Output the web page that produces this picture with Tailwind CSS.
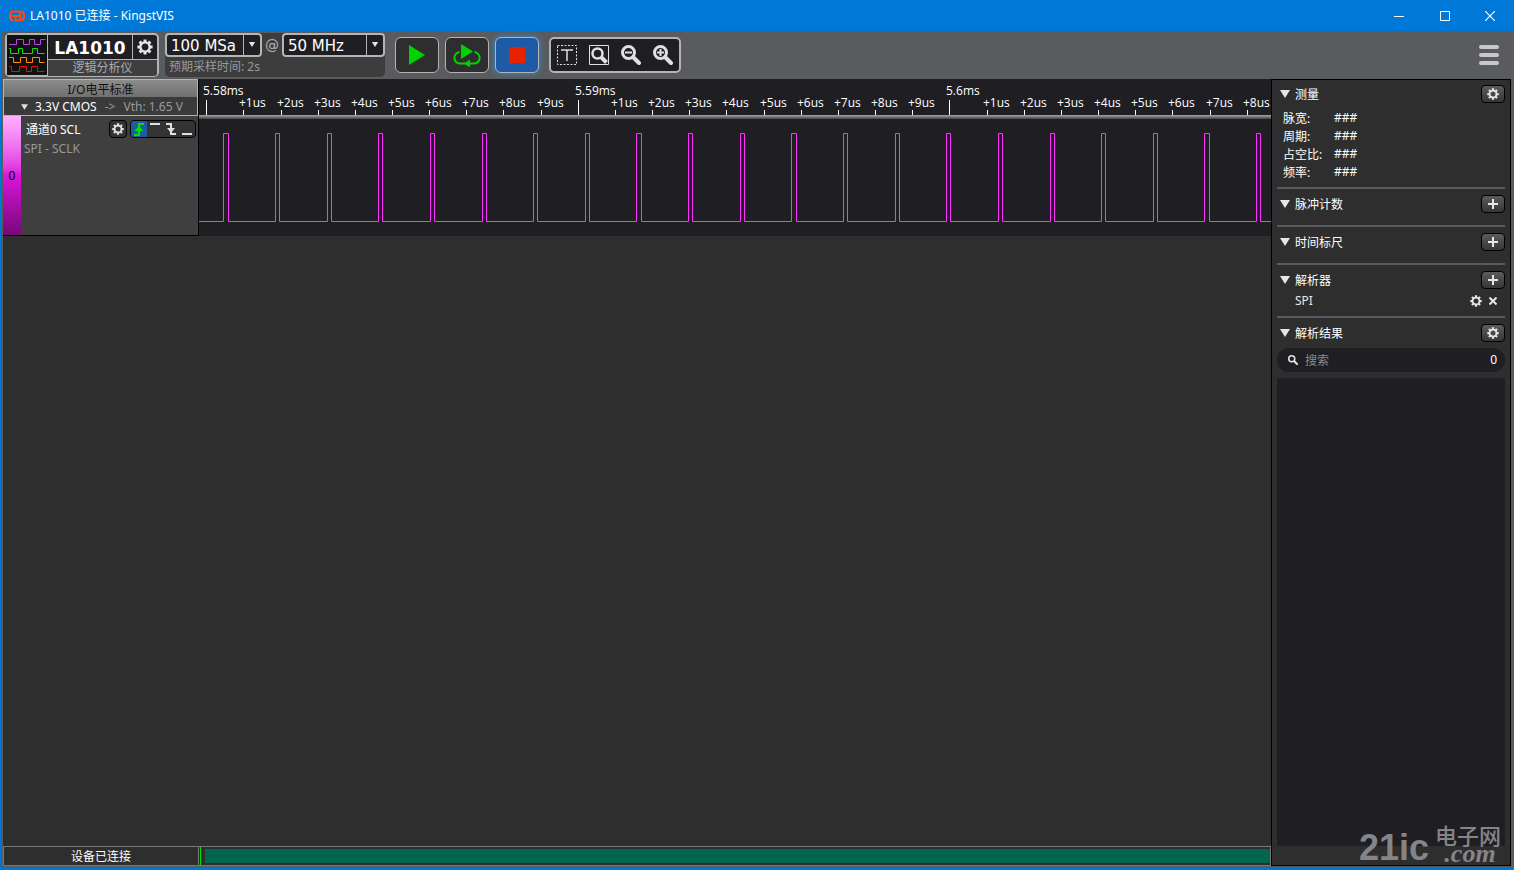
<!DOCTYPE html>
<html lang="zh-CN">
  <head>
    <meta charset="UTF-8" />
    <meta name="viewport" content="width=device-width, initial-scale=1.0" />
    <title>LA1010 已连接 - KingstVIS</title>
    <script src="https://cdn.jsdelivr.net/npm/@tailwindcss/browser@4"></script>
    <style>
      body {
        font-family: "Noto Sans", "Noto Sans CJK SC", sans-serif;
      }
    </style>
  </head>
  <body class="h-screen overflow-hidden bg-[#0078d7] text-xs leading-4 text-white">
    <!-- shared icons -->
    <svg class="hidden">
      <symbol id="gear" viewBox="0 0 16 16">
        <g fill="none" stroke="currentColor">
          <circle cx="8" cy="8" r="4.6" stroke-width="2.4" />
          <path
            stroke-width="3"
            d="M8 .4v2.6M8 13v2.6M.4 8H3M13 8h2.6M2.6 2.6l1.8 1.8M11.6 11.6l1.8 1.8M13.4 2.6l-1.8 1.8M4.4 11.6l-1.8 1.8"
          />
        </g>
      </symbol>
      <symbol id="plus" viewBox="0 0 12 12">
        <path fill="none" stroke="currentColor" stroke-width="2" d="M6 1v10M1 6h10" />
      </symbol>
      <symbol id="down" viewBox="0 0 10 8">
        <path fill="currentColor" d="M0 0h10L5 8z" />
      </symbol>
      <symbol id="lens" viewBox="0 0 20 20">
        <g fill="none" stroke="currentColor">
          <circle cx="7.5" cy="7.5" r="6" stroke-width="3" />
          <path stroke-width="4" stroke-linecap="round" d="M13 13l5 5" />
        </g>
      </symbol>
    </svg>

    <div class="relative flex h-full flex-col">
      <!-- title bar -->
      <header class="flex h-[31px] shrink-0 items-center pr-px pl-[9px]">
        <svg class="h-3 w-4" viewBox="0 0 16 12" fill="none" stroke="#ff4a12" stroke-width="2">
          <path d="M4 1A5.500 5.500 0 0 0 4 11M12.500 1a6 6 0 0 1 0 10" />
          <path d="M5 1.500h4.500q2 0 2 2.200t-2 2.300H6.500v4.500h3q2 0 2-2.200T9.500 6" />
          <path d="M2 6h4" />
        </svg>
        <h1 class="ml-[5px]">LA1010 已连接 - KingstVIS</h1>
        <div class="ml-auto flex h-full">
          <button aria-label="Minimize" class="flex w-[46px] items-center justify-center">
            <svg class="size-[10px]" viewBox="0 0 10 10"><path stroke="#fff" d="M0 5.500h10" /></svg>
          </button>
          <button aria-label="Maximize" class="flex w-[45px] items-center justify-center">
            <svg class="size-[10px]" viewBox="0 0 10 10" fill="none"><path stroke="#fff" d="M.5.5h9v9h-9z" /></svg>
          </button>
          <button aria-label="Close" class="flex w-[46px] items-center justify-center">
            <svg class="size-[10px]" viewBox="0 0 10 10"><path stroke="#fff" stroke-width="1.200" d="M0 0l10 10M10 0L0 10" /></svg>
          </button>
        </div>
      </header>

      <div class="mx-px mb-[2px] flex min-h-0 grow flex-col bg-[#595b5e] px-[2px] pb-[2px]">
        <!-- toolbar -->
        <div class="flex h-12 shrink-0 items-center pb-px pl-[2px] font-['DejaVu_Sans','Noto_Sans_CJK_SC',sans-serif]">
          <div class="flex h-11 w-[154px] rounded-[5px] border-2 border-[#b4b4b4] bg-[#1f1e23]">
            <svg class="h-10 w-10 bg-[#111]" viewBox="0 0 40 40" fill="none" stroke-width="1">
              <path stroke="#c63cff" d="M2 9.500h7.500v-5h7v5h6v-5h5v5h6v-5h5" />
              <path stroke="#0ee00e" d="M2 13.500h1.500v5h8v-5h4v5h10v-5h5v5h7" />
              <path stroke="#ff8a10" d="M2 22.500h4.500v5h7v-5h6v5h6v-5h7v5h5" />
              <path stroke="#e01010" d="M2 31.500h2.500v5h8v-5h7v5h5v-5h6v5h7" />
            </svg>
            <div class="flex grow flex-col border-l border-[#b4b4b4]">
              <div class="flex h-[25px] border-b border-[#b4b4b4]">
                <span class="grow text-center text-[17px] leading-[26px] font-bold">LA1010</span>
                <button aria-label="Device settings" class="flex w-[25px] items-center justify-center border-l border-[#b4b4b4] text-[#e6e6e6]">
                  <svg class="size-4"><use href="#gear" /></svg>
                </button>
              </div>
              <div class="grow rounded-br-[3px] bg-[#3f3f3f] text-center leading-4 text-[#aaa]">逻辑分析仪</div>
            </div>
          </div>

          <div class="ml-[6px] flex h-11 w-[220px] flex-col rounded-[5px] bg-[#3d3d3d]">
            <div class="flex h-6 items-center">
              <div class="relative h-6 w-[97px] text-[#e6e6e6]">
                <select aria-label="Sample depth" class="h-full w-full appearance-none rounded-[4px] border-2 border-[#b4b4b4] bg-[#1f1e23] pt-[2px] pl-1 text-[15px] text-white">
                  <option>100 MSa</option>
                </select>
                <span class="pointer-events-none absolute inset-y-[2px] right-[2px] flex w-[17px] items-center justify-center border-l border-[#b4b4b4]">
                  <svg class="h-[5px] w-2"><use href="#down" /></svg>
                </span>
              </div>
              <span class="grow text-center text-sm text-[#b4b4b4]">@</span>
              <div class="relative h-6 w-[103px] text-[#e6e6e6]">
                <select aria-label="Sample rate" class="h-full w-full appearance-none rounded-[4px] border-2 border-[#b4b4b4] bg-[#1f1e23] pt-[2px] pl-1 text-[15px] text-white">
                  <option>50 MHz</option>
                </select>
                <span class="pointer-events-none absolute inset-y-[2px] right-[2px] flex w-[17px] items-center justify-center border-l border-[#b4b4b4]">
                  <svg class="h-[5px] w-2"><use href="#down" /></svg>
                </span>
              </div>
            </div>
            <p class="pt-px pl-1 font-['Noto_Sans','Noto_Sans_CJK_SC',sans-serif] leading-[18px] text-[#9a9a9a]">预期采样时间: 2s</p>
          </div>

          <div class="ml-[10px] flex gap-[6px]">
            <button aria-label="Start" class="flex h-9 w-11 items-center justify-center rounded-md border border-[#b4b4b4] bg-[#2e2e2e]">
              <svg class="h-5 w-4" viewBox="0 0 16 20"><path fill="#00d400" d="M0 0l16 10L0 20z" /></svg>
            </button>
            <button aria-label="Repeat" class="flex h-9 w-11 items-center justify-center rounded-md border border-[#b4b4b4] bg-[#2e2e2e]">
              <svg class="h-6 w-7" viewBox="0 0 28 24">
                <path fill="#00d400" d="M8 1l12 7.500L8 16zM11 20.500l6-4v8z" />
                <path fill="none" stroke="#00d400" stroke-width="2" d="M6.500 9C-.5 10.500-.5 20.500 8 20.500h12c8.500 0 8.500-10 1.500-11.500" />
              </svg>
            </button>
            <button aria-label="Stop" class="flex h-9 w-11 items-center justify-center rounded-md border border-[#b4b4b4] bg-[#1e5aa5] shadow-[0_0_6px_#2b8fd8]">
              <span class="size-4 bg-[#e62200]"></span>
            </button>
          </div>

          <div class="ml-[10px] flex h-9 w-[132px] items-center justify-center gap-3 rounded-[5px] border-2 border-[#b4b4b4] bg-[#1f1e23] text-[#e0e0e0]">
            <button aria-label="Text marker">
              <svg class="block size-5" viewBox="0 0 20 20" fill="none" stroke="currentColor">
                <rect x=".5" y=".5" width="19" height="19" stroke-dasharray="2 1.500" />
                <path stroke-width="1.500" d="M4 5h12M10 5v11" />
              </svg>
            </button>
            <button aria-label="Zoom to fit">
              <svg class="block size-5" viewBox="0 0 20 20" fill="none" stroke="currentColor">
                <path d="M.5.5h19v19H.5z" />
                <circle cx="8.500" cy="8.500" r="5" stroke-width="2.500" />
                <path stroke-width="4" d="M12.500 12.500l5 5" />
              </svg>
            </button>
            <button aria-label="Zoom out">
              <svg class="block size-5" viewBox="0 0 20 20" fill="none" stroke="currentColor">
                <use href="#lens" />
                <path stroke-width="2" d="M4 7.500h7" />
              </svg>
            </button>
            <button aria-label="Zoom in">
              <svg class="block size-5" viewBox="0 0 20 20" fill="none" stroke="currentColor">
                <use href="#lens" />
                <path stroke-width="2" d="M4 7.500h7M7.500 4v7" />
              </svg>
            </button>
          </div>

          <button aria-label="Menu" class="mr-3 ml-auto flex flex-col gap-1">
            <span class="h-1 w-5 rounded-full bg-[#c8c8c8]"></span>
            <span class="h-1 w-5 rounded-full bg-[#c8c8c8]"></span>
            <span class="h-1 w-5 rounded-full bg-[#c8c8c8]"></span>
          </button>
        </div>

        <div class="flex min-h-0 grow">
          <main class="flex min-w-0 grow flex-col bg-[#2e2e2e]">
            <div class="flex h-[157px]">
              <!-- channel list -->
              <section class="flex w-[196px] shrink-0 flex-col border-r border-black">
                <div class="h-[37px] border border-[#b4b4b4] bg-[#3a3a3a]">
                  <h2 class="h-[17px] bg-linear-to-b from-[#8c8c8c] to-[#707070] text-center leading-5 text-[#111]">I/O电平标准</h2>
                  <p class="flex items-center pl-[17px] leading-[19px] text-[#9a9a9a]">
                    <svg class="mr-[7px] h-[6px] w-[7px] text-[#e0e0e0]"><use href="#down" /></svg>
                    <span class="mr-2 text-white">3.3V CMOS</span><span class="mr-2">-&gt;</span>Vth: 1.65 V
                  </p>
                </div>
                <div class="flex grow border-b border-black bg-[#3f3f3f]">
                  <div class="flex w-[18px] items-center justify-center bg-linear-to-b from-[#ffb0ff] via-[#dc14dc] to-[#780878] text-black">0</div>
                  <div class="grow pt-1 pr-[2px] pl-[3px]">
                    <div class="flex h-[18px] items-center">
                      <span class="pt-[2px] pl-[2px]">通道0 SCL</span>
                      <button aria-label="Channel settings" class="ml-auto flex size-[18px] items-center justify-center rounded-[4px] border border-black bg-[#333] text-[#e0e0e0]">
                        <svg class="size-3"><use href="#gear" /></svg>
                      </button>
                      <div class="ml-[3px] flex h-[18px] w-[66px] rounded-[4px] border border-black bg-[#333]">
                        <button aria-label="Rising edge" class="rounded-l-[3px] bg-[#1e5aa5]">
                          <svg class="block size-4" viewBox="0 0 16 16"><path fill="none" stroke="#00e400" stroke-width="2" d="M3 14h5V3h5" /><path fill="#00e400" d="M3.500 10L8 5l4.500 5z" /></svg>
                        </button>
                        <button aria-label="High level">
                          <svg class="block size-4" viewBox="0 0 16 16"><path stroke="#e0e0e0" stroke-width="2" d="M3 3h10" /></svg>
                        </button>
                        <button aria-label="Falling edge">
                          <svg class="block size-4" viewBox="0 0 16 16"><path fill="none" stroke="#e0e0e0" stroke-width="2" d="M3 3h5v10h5" /><path fill="#e0e0e0" d="M4 7h8l-4 5z" /></svg>
                        </button>
                        <button aria-label="Low level">
                          <svg class="block size-4" viewBox="0 0 16 16"><path stroke="#e0e0e0" stroke-width="2" d="M3 13h10" /></svg>
                        </button>
                      </div>
                    </div>
                    <p class="pt-[3px] text-[#9a9a9a]">SPI - SCLK</p>
                  </div>
                </div>
              </section>

              <!-- ruler and waveform -->
              <section class="relative min-w-0 grow bg-[#1f1e23]">
                <div class="mt-9 h-1 bg-linear-to-b from-[#a8a8a8] to-[#444]"></div>
                <svg id="plot" class="absolute inset-0 h-full w-full fill-white font-['Open_Sans',sans-serif] text-xs"></svg>
              </section>
            </div>

            <!-- status bar -->
            <footer class="mt-auto flex h-5">
              <p class="w-[196px] shrink-0 border border-[#777] text-center leading-[19px]">设备已连接</p>
              <div class="flex grow border-y border-r border-[#777] bg-[#2e2e2e] py-[2px]">
                <span class="-my-[2px] mr-1 ml-px w-px bg-[#00e400]"></span>
                <div class="grow bg-[#04664f]"></div>
              </div>
            </footer>
          </main>

          <!-- analysis panel -->
          <aside class="flex w-60 shrink-0 flex-col border border-black bg-[#2e2e2e] px-[5px] pb-[19px]">
            <section class="h-[109px] border-b-2 border-[#595b5e] pt-[5px]">
              <div class="flex h-[18px] items-center">
                <svg class="mr-[5px] ml-[3px] h-2 w-[10px] text-[#e6e6e6]"><use href="#down" /></svg>
                <h2 class="pt-[2px]">测量</h2>
                <button aria-label="Measure settings" class="ml-auto flex h-[18px] w-6 items-center justify-center rounded-[4px] border border-black bg-linear-to-b from-[#5c5c5c] to-[#363636] text-[#e6e6e6]">
                  <svg class="size-3"><use href="#gear" /></svg>
                </button>
              </div>
              <dl class="mt-[6px] grid grid-cols-[51px_1fr] pl-[6px] leading-[17px]">
                <dt class="pt-px">脉宽:</dt><dd>###</dd>
                <dt class="pt-px">周期:</dt><dd>###</dd>
                <dt class="pt-px">占空比:</dt><dd>###</dd>
                <dt class="pt-px">频率:</dt><dd>###</dd>
              </dl>
            </section>
            <section class="h-[38px] border-b-2 border-[#595b5e] pt-[6px]">
              <div class="flex h-[18px] items-center">
                <svg class="mr-[5px] ml-[3px] h-2 w-[10px] text-[#e6e6e6]"><use href="#down" /></svg>
                <h2 class="pt-[2px]">脉冲计数</h2>
                <button aria-label="Add pulse counter" class="ml-auto flex h-[18px] w-6 items-center justify-center rounded-[4px] border border-black bg-linear-to-b from-[#5c5c5c] to-[#363636] text-[#e6e6e6]">
                  <svg class="size-3"><use href="#plus" /></svg>
                </button>
              </div>
            </section>
            <section class="h-[38px] border-b-2 border-[#595b5e] pt-[6px]">
              <div class="flex h-[18px] items-center">
                <svg class="mr-[5px] ml-[3px] h-2 w-[10px] text-[#e6e6e6]"><use href="#down" /></svg>
                <h2 class="pt-[2px]">时间标尺</h2>
                <button aria-label="Add time ruler" class="ml-auto flex h-[18px] w-6 items-center justify-center rounded-[4px] border border-black bg-linear-to-b from-[#5c5c5c] to-[#363636] text-[#e6e6e6]">
                  <svg class="size-3"><use href="#plus" /></svg>
                </button>
              </div>
            </section>
            <section class="h-[53px] border-b-2 border-[#595b5e] pt-[6px]">
              <div class="flex h-[18px] items-center">
                <svg class="mr-[5px] ml-[3px] h-2 w-[10px] text-[#e6e6e6]"><use href="#down" /></svg>
                <h2 class="pt-[2px]">解析器</h2>
                <button aria-label="Add analyzer" class="ml-auto flex h-[18px] w-6 items-center justify-center rounded-[4px] border border-black bg-linear-to-b from-[#5c5c5c] to-[#363636] text-[#e6e6e6]">
                  <svg class="size-3"><use href="#plus" /></svg>
                </button>
              </div>
              <div class="flex items-center pt-[3px] pr-2 pl-[18px] text-[#e6e6e6]">
                <span class="leading-[18px]">SPI</span>
                <button aria-label="Analyzer settings" class="ml-auto">
                  <svg class="block size-3"><use href="#gear" /></svg>
                </button>
                <button aria-label="Remove analyzer" class="ml-[7px]">
                  <svg class="block size-2" viewBox="0 0 8 8"><path stroke="currentColor" stroke-width="2" d="M.5.5l7 7M7.500.5l-7 7" /></svg>
                </button>
              </div>
            </section>
            <section class="flex min-h-0 grow flex-col pt-[6px]">
              <div class="flex h-[18px] items-center">
                <svg class="mr-[5px] ml-[3px] h-2 w-[10px] text-[#e6e6e6]"><use href="#down" /></svg>
                <h2 class="pt-[2px]">解析结果</h2>
                <button aria-label="Result settings" class="ml-auto flex h-[18px] w-6 items-center justify-center rounded-[4px] border border-black bg-linear-to-b from-[#5c5c5c] to-[#363636] text-[#e6e6e6]">
                  <svg class="size-3"><use href="#gear" /></svg>
                </button>
              </div>
              <label class="mt-[6px] flex h-6 shrink-0 items-center rounded-full bg-[#1f1e23] pr-2 pl-[11px]">
                <svg class="mr-[7px] size-[10px] text-[#e6e6e6]"><use href="#lens" /></svg>
                <input type="text" placeholder="搜索" aria-label="搜索" class="w-0 grow pt-[2px] outline-none placeholder:text-[#8a8a8a]" />
                <span>0</span>
              </label>
              <div class="mt-[6px] grow bg-[#1f1e23]"></div>
            </section>
          </aside>
        </div>
      </div>

      <!-- site mark over the lower right corner -->
      <div class="pointer-events-none absolute right-[9px] bottom-1 flex items-end gap-[6px] text-[#858587]">
        <span class="font-['Liberation_Sans_Narrow','Liberation_Sans',sans-serif] text-[36px] leading-9 font-bold">21ic</span>
        <span class="flex w-[70px] flex-col pb-1">
          <span class="font-['Noto_Sans_CJK_SC',sans-serif] text-[22px] leading-6 font-medium">电子网</span>
          <span class="text-center font-['Liberation_Serif',serif] text-[26px] leading-4 font-bold italic">.com</span>
        </span>
      </div>
    </div>

    <script>
      const plot = document.getElementById("plot");
      const majors = ["5.58ms", "5.59ms", "5.6ms", "5.61ms", "5.62ms", "5.63ms"];
      const width = plot.clientWidth;
      let out = "";

      // ruler: one tick per microsecond
      for (let i = 0; 7.7 + i * 37.16 < width; i++) {
        const x = Math.floor(7.7 + i * 37.16);
        const major = i % 10 === 0;
        const label = major ? majors[i / 10] : `+${i % 10}us`;
        out += `<rect x="${x}" y="${major ? 21 : 31}" width="1" height="${major ? 15 : 5}" />`;
        out += `<text x="${x - (major ? 3 : 4)}" y="${major ? 16 : 28}">${label || ""}</text>`;
      }

      // clock pulses
      let d = "M0 142.5";
      for (let i = 0; 24.95 + i * 51.63 < width; i++) {
        const rise = Math.floor(24.95 + i * 51.63) + 0.5;
        const fall = Math.floor(29.1 + i * 51.63) + 0.5;
        d += `H${rise}V54.5H${fall}V142.5`;
      }
      out += `<path d="${d}H${width}" fill="none" stroke="#ff30ff" />`;
      plot.innerHTML = out;
    </script>
  </body>
</html>
